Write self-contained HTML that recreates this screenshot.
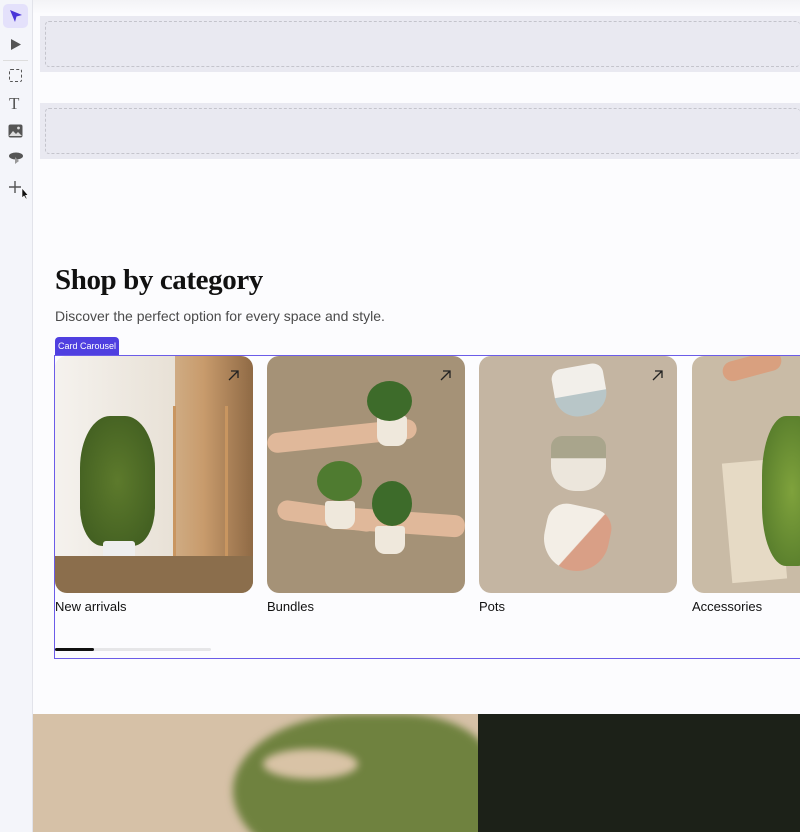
<!DOCTYPE html>
<html style="overflow:hidden;width:800px;height:832px"><head><meta charset="utf-8"><style>
*{margin:0;padding:0;box-sizing:border-box}
body{width:800px;height:832px;overflow:hidden;background:#fcfcfe;font-family:"Liberation Sans",sans-serif;position:relative}
.abs{position:absolute}
.side{left:0;top:0;width:33px;height:832px;background:#f4f5fa;border-right:1px solid #e2e3ea}
.band{left:40px;width:760px;height:56px;background:#e9e9f1}
.band div{position:absolute;left:5px;top:5px;right:0;bottom:5px;border:1px dashed #c4c4cc;border-right:none;border-radius:4px}
.card{top:356px;width:198px;height:237px;border-radius:12px;overflow:hidden}
.lbl{top:599px;font-size:13px;color:#111}
.arrow{position:absolute;top:14px;right:14px}
</style></head><body>
<div class="abs" style="left:33px;top:0;width:767px;height:14px;background:linear-gradient(#f3f3f6,#fcfcfe)"></div>
<div class="abs side">
 <div class="abs" style="left:3px;top:4px;width:25px;height:24px;background:#e4e1fb;border-radius:5px"></div>
 <svg class="abs" style="left:9px;top:9px" width="14" height="14" viewBox="0 0 14 14"><path d="M1 1 L13 6 L7.5 7.5 L6 13 Z" fill="#4a36d8"/></svg>
 <svg class="abs" style="left:10px;top:38px" width="12" height="13" viewBox="0 0 12 13"><path d="M1 1 L11 6.5 L1 12 Z" fill="#555"/></svg>
 <div class="abs" style="left:3px;top:60px;width:25px;height:1px;background:#ddd"></div>
 <div class="abs" style="left:9px;top:69px;width:13px;height:13px;border:1.5px dashed #555;border-radius:2px"></div>
 <div class="abs" style="left:9px;top:94px;font:17px 'Liberation Serif',serif;color:#555">T</div>
 <svg class="abs" style="left:8px;top:124px" width="15" height="14" viewBox="0 0 15 14"><rect x="0.5" y="0.5" width="14" height="13" rx="2" fill="#555"/><path d="M1 12 L5 7 L8 10 L10 8 L14 12 Z" fill="#ddd"/><circle cx="10.5" cy="4" r="1.4" fill="#ddd"/></svg>
 <svg class="abs" style="left:8px;top:151px" width="16" height="14" viewBox="0 0 16 14"><ellipse cx="8" cy="5" rx="7" ry="3.5" fill="#555"/><path d="M7 6 L7 13 L11 10 Z" fill="#999"/></svg>
 <svg class="abs" style="left:8px;top:180px" width="22" height="20" viewBox="0 0 22 20"><path d="M7 1 V13 M1 7 H13" stroke="#555" stroke-width="1.4"/><path d="M14 8 L14 18 L16 16 L18 19 L19 18.5 L17.5 15.5 L20 15 Z" fill="#111" stroke="#fff" stroke-width="0.6"/></svg>
</div>
<div class="abs band" style="top:16px"><div></div></div>
<div class="abs band" style="top:103px"><div></div></div>
<div class="abs" style="left:55px;top:264px;font:bold 29px 'Liberation Serif',serif;color:#111;letter-spacing:-0.4px">Shop by category</div>
<div class="abs" style="left:55px;top:308px;font-size:14px;color:#4a4a4a">Discover the perfect option for every space and style.</div>
<div class="abs" style="left:55px;top:337px;width:64px;height:18px;background:#4f3fe0;border-radius:4px 4px 0 0;color:#fff;font-size:9px;line-height:18px;text-align:center">Card Carousel</div>
<div class="abs" style="left:54px;top:355px;width:746px;height:304px;border:1.5px solid #6b5ce8;border-right:none"></div>
<div class="abs card" style="left:55px;background:linear-gradient(90deg,#efe9e1 0%,#d9c3a4 40%,#c89b6c 75%,#8f6a45 100%)">
 <div class="abs" style="left:0;top:0;width:120px;height:237px;background:linear-gradient(90deg,#f5f2ee,#e8e1d6)"></div>
 <div class="abs" style="left:118px;top:50px;width:55px;height:180px;border:3px solid #c99660;border-top:none"></div>
 <div class="abs" style="left:25px;top:60px;width:75px;height:130px;border-radius:40% 40% 30% 30%;background:radial-gradient(#5d7a2c,#3d5a1f)"></div>
 <div class="abs" style="left:48px;top:185px;width:32px;height:32px;background:#eee;border-radius:3px 3px 10px 10px"></div>
 <div class="abs" style="left:0;top:200px;width:198px;height:37px;background:#8b6e4c"></div>
 <svg class="arrow" width="11" height="11"><path d="M1 10 L10 1 M3 1 H10 V8" stroke="#222" stroke-width="1.3" fill="none"/></svg>
</div>
<div class="abs card" style="left:267px;background:#a59277">
 <div class="abs" style="left:0;top:70px;width:150px;height:20px;background:#e0b89a;border-radius:10px;transform:rotate(-6deg)"></div>
 <div class="abs" style="left:60px;top:155px;width:138px;height:22px;background:#e0b89a;border-radius:10px;transform:rotate(4deg)"></div>
 <div class="abs" style="left:10px;top:150px;width:100px;height:20px;background:#e0b89a;border-radius:10px;transform:rotate(8deg)"></div>
 <div class="abs" style="left:110px;top:60px;width:30px;height:30px;background:#efe8dc;border-radius:3px 3px 10px 10px"></div>
 <div class="abs" style="left:100px;top:25px;width:45px;height:40px;background:#3d6b2a;border-radius:50%"></div>
 <div class="abs" style="left:58px;top:145px;width:30px;height:28px;background:#efe8dc;border-radius:3px 3px 10px 10px"></div>
 <div class="abs" style="left:50px;top:105px;width:45px;height:40px;background:#4f7b30;border-radius:50%"></div>
 <div class="abs" style="left:108px;top:170px;width:30px;height:28px;background:#efe8dc;border-radius:3px 3px 10px 10px"></div>
 <div class="abs" style="left:105px;top:125px;width:40px;height:45px;background:#3d6b2a;border-radius:50%"></div>
 <svg class="arrow" width="11" height="11"><path d="M1 10 L10 1 M3 1 H10 V8" stroke="#222" stroke-width="1.3" fill="none"/></svg>
</div>
<div class="abs card" style="left:479px;background:#c4b5a2">
 <div class="abs" style="left:75px;top:10px;width:52px;height:50px;background:linear-gradient(#f2efea 55%,#b8c6c8 56%);border-radius:20% 20% 45% 45%;transform:rotate(-10deg)"></div>
 <div class="abs" style="left:72px;top:80px;width:55px;height:55px;background:linear-gradient(#a9a58c 40%,#ece6dc 41%);border-radius:20% 20% 45% 45%"></div>
 <div class="abs" style="left:65px;top:150px;width:65px;height:65px;background:linear-gradient(120deg,#f3eee6 55%,#d99f86 56%);border-radius:30% 30% 50% 50%;transform:rotate(12deg)"></div>
 <svg class="arrow" width="11" height="11"><path d="M1 10 L10 1 M3 1 H10 V8" stroke="#222" stroke-width="1.3" fill="none"/></svg>
</div>
<div class="abs card" style="left:692px;width:108px;border-radius:12px 0 0 12px;background:#c9bba6">
 <div class="abs" style="left:30px;top:0;width:60px;height:20px;background:#d9a07f;border-radius:10px;transform:rotate(-15deg)"></div>
 <div class="abs" style="left:35px;top:105px;width:55px;height:120px;background:#e6dac5;transform:rotate(-5deg)"></div>
 <div class="abs" style="left:70px;top:60px;width:60px;height:150px;background:radial-gradient(#7fa23c,#4e7428);border-radius:40%"></div>
</div>
<div class="abs lbl" style="left:55px">New arrivals</div>
<div class="abs lbl" style="left:267px">Bundles</div>
<div class="abs lbl" style="left:479px">Pots</div>
<div class="abs lbl" style="left:692px">Accessories</div>
<div class="abs" style="left:55px;top:648px;width:156px;height:3px;background:#e6e6e8;border-radius:2px"></div>
<div class="abs" style="left:55px;top:648px;width:39px;height:3px;background:#111;border-radius:2px"></div>
<div class="abs" style="left:33px;top:714px;width:445px;height:118px;background:#d6c1a7;overflow:hidden">
 <div class="abs" style="left:200px;top:0;width:260px;height:160px;background:#6f823f;border-radius:55% 40% 30% 60%;filter:blur(4px)"></div>
 <div class="abs" style="left:230px;top:35px;width:95px;height:30px;background:#d9c3a6;border-radius:50%;filter:blur(4px)"></div>
</div>
<div class="abs" style="left:478px;top:714px;width:322px;height:118px;background:#1c2118"></div>
</body></html>
